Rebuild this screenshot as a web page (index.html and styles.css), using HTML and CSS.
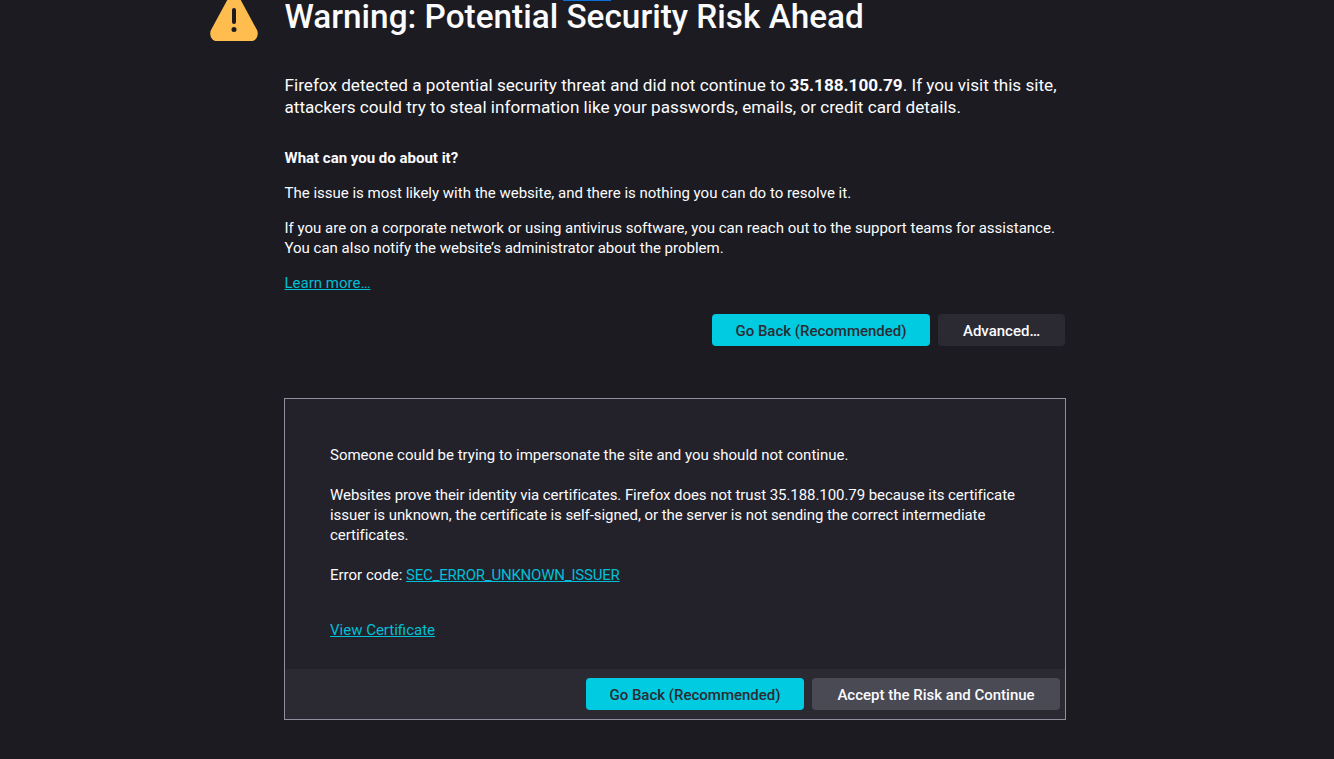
FILE: index.html
```html
<!DOCTYPE html>
<html lang="en">
<head>
<meta charset="utf-8">
<title>Warning: Potential Security Risk Ahead</title>
<link rel="stylesheet" href="styles.css">
</head>
<body>
<div class="shell">
  <div class="icon-col">
    <svg class="warn" width="50" height="50" viewBox="0 0 50 50"><path fill="#ffbd4f" d="M25 0C23 0 22 1.300 21 3L2 38c-2 4 0 11 6 11h34c6 0 8-7 6-11L29 3C28 1.300 27 0 25 0z"/><rect x="23" y="16" width="4" height="16" rx="2" fill="#1c1b22"/><circle cx="25" cy="37.500" r="2.500" fill="#1c1b22"/></svg>
  </div>
  <main class="content">
    <h1 class="title text">Warning: Potential Security Risk Ahead</h1>
    <p class="lead text">Firefox detected a potential security threat and did not continue to <strong>35.188.100.79</strong>. If you visit this site, attackers could try to steal information like your passwords, emails, or credit card details.</p>
    <p class="what text"><strong>What can you do about it?</strong></p>
    <p class="para text">The issue is most likely with the website, and there is nothing you can do to resolve it.</p>
    <p class="para text">If you are on a corporate network or using antivirus software, you can reach out to the support teams for assistance. You can also notify the website’s administrator about the problem.</p>
    <p class="para text"><a href="#">Learn more…</a></p>
    <div class="actions">
      <button class="btn primary">Go Back (Recommended)</button>
      <button class="btn secondary">Advanced…</button>
    </div>
    <section class="panel">
      <div class="panel-body">
        <p class="panel-p">Someone could be trying to impersonate the site and you should not continue.</p>
        <p class="panel-p tight">Websites prove their identity via certificates. Firefox does not trust 35.188.100.79 because its certificate issuer is unknown, the certificate is self-signed, or the server is not sending the correct intermediate certificates.</p>
        <p class="panel-p">Error code: <a class="code" href="#">SEC_ERROR_UNKNOWN_ISSUER</a></p>
        <p class="panel-link"><a href="#">View Certificate</a></p>
      </div>
      <div class="panel-foot">
        <button class="btn primary">Go Back (Recommended)</button>
        <button class="btn accept">Accept the Risk and Continue</button>
      </div>
    </section>
  </main>
</div>
<div class="top-mark"></div>
</body>
</html>
```
FILE: styles.css
```css
html, body { margin: 0; padding: 0; height: 100%; overflow: hidden; }
body { background: #1c1b22; color: #fbfbfe; font-family: Roboto, "Noto Sans", sans-serif; font-size: 15px; line-height: 20px; }
.shell { display: flex; margin-left: 208px; }
.icon-col { width: 76px; flex: none; }
.warn { display: block; margin: -8px 0 0 0.500px; }
.content { width: 782px; }
.text { padding-left: 0.500px; }
.title { margin: 0; font-size: 33.350px; line-height: 33px; font-weight: 500; }
.lead { margin: 41px 0 0; font-size: 17.150px; line-height: 22px; width: 781px; }
.what { margin: 30px 0 0; }
.para { margin: 15px 0 0; }
a { color: #00bfd6; text-decoration: underline; }
.code { letter-spacing: -0.200px; }
.actions { display: flex; justify-content: flex-end; gap: 8px; margin-top: 21px; padding-right: 1px; }
.btn { border: 0; border-radius: 4px; height: 32px; padding: 1px 0 0; font-family: inherit; font-size: 15px; font-weight: 500; }
.primary { width: 218px; background: #00cbe0; color: #2b2a33; }
.secondary { width: 127px; background: #2b2a33; color: #fbfbfe; }
.accept { width: 248px; background: #4a4a55; color: #fbfbfe; }
.panel { margin-top: 52px; border: 1px solid #8f8f9d; background: #23222b; width: 780px; }
.panel-body { padding: 46px 44px 29px 45px; height: 195px; box-sizing: content-box; }
.panel-p { margin: 0 0 20px; }
.tight { letter-spacing: -0.060px; }
.panel-link { margin: 35px 0 0; }
.panel-foot { display: flex; justify-content: flex-end; gap: 8px; background: #2b2a33; padding: 9px 5px; }
.top-mark { position: absolute; left: 563px; top: 0; width: 48px; height: 1px; background: #0a6fd6; }
```
